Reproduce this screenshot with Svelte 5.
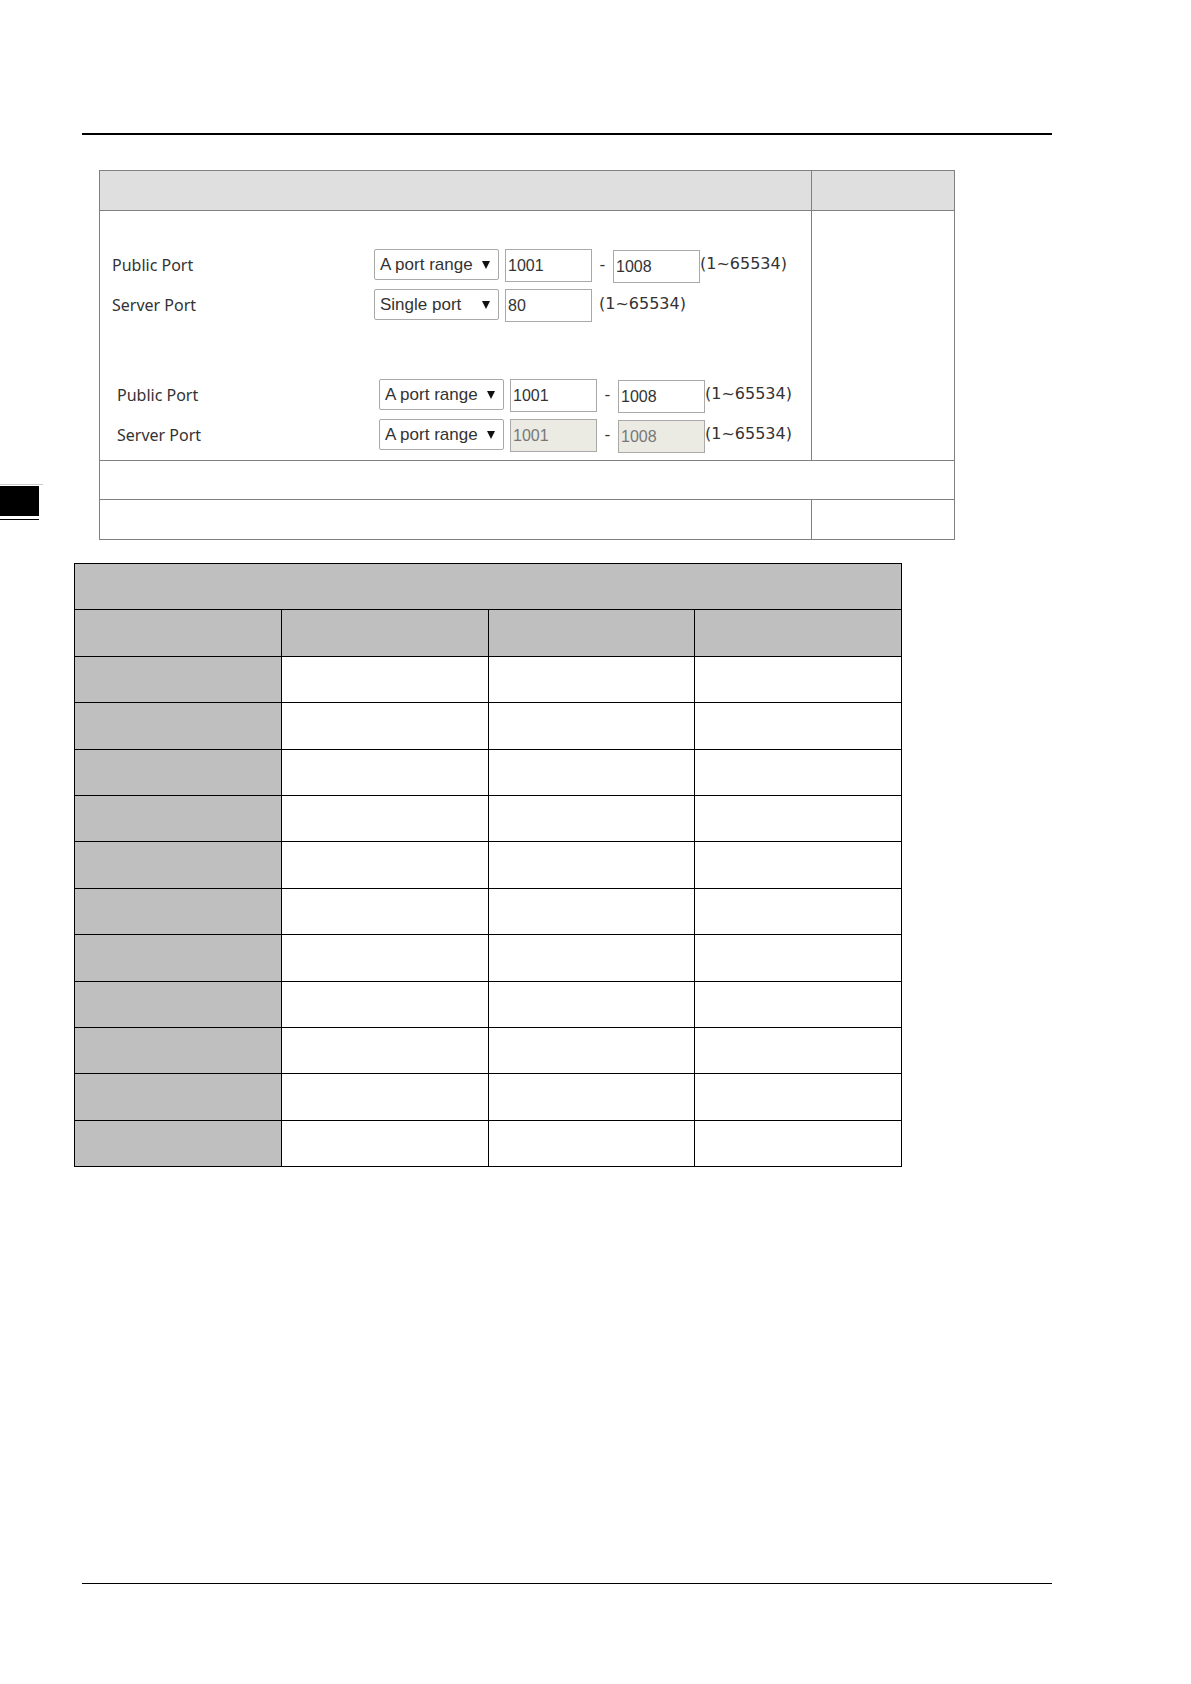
<script>
  const groups = [
    {
      id: 'single',
      rows: [
        { label: 'Public Port', mode: 'A port range', from: '1001', to: '1008' },
        { label: 'Server Port', mode: 'Single port', from: '80' }
      ]
    },
    {
      id: 'range',
      rows: [
        { label: 'Public Port', mode: 'A port range', from: '1001', to: '1008' },
        { label: 'Server Port', mode: 'A port range', from: '1001', to: '1008', disabled: true }
      ]
    }
  ];

  const modes = ['A port range', 'Single port'];
  const bodyRows = Array.from({ length: 11 }, (_, i) => i);
</script>

<div class="page">
  <aside class="gutter">
    <div class="tab-edge"></div>
    <div class="tab"></div>
    <div class="tab-line"></div>
  </aside>

  <main>
    <hr class="rule top" />

    <div class="settings-wrap">
      <table class="settings">
        <colgroup>
          <col class="wide" />
          <col />
        </colgroup>
        <thead>
          <tr class="head"><th></th><th></th></tr>
        </thead>
        <tbody>
          <tr>
            <td class="ports">
              {#each groups as group (group.id)}
                <div class="group {group.id}">
                  {#each group.rows as row, i}
                    {@const id = `${group.id}-${i}`}
                    <div class="row">
                      <label for={id}>{row.label}</label>
                      <div class="select">
                        <select {id} value={row.mode}>
                          {#each modes as mode}
                            <option>{mode}</option>
                          {/each}
                        </select>
                        <svg viewBox="0 0 8 8" aria-hidden="true"><path d="M0 0h8L4 8z" /></svg>
                      </div>
                      <input type="text" value={row.from} disabled={row.disabled} aria-label={row.label} />
                      {#if row.to}
                        <span class="dash">-</span>
                        <input class="to" type="text" value={row.to} disabled={row.disabled} aria-label={row.label} />
                        <span class="hint">(1~65534)</span>
                      {:else}
                        <span class="hint alone">(1~65534)</span>
                      {/if}
                    </div>
                  {/each}
                </div>
              {/each}
            </td>
            <td></td>
          </tr>
          <tr class="note"><td colspan="2"></td></tr>
          <tr class="last"><td></td><td></td></tr>
        </tbody>
      </table>
    </div>

    <div class="matrix-wrap">
      <table class="matrix">
        <thead>
          <tr><th colspan="4"></th></tr>
          <tr><th></th><th></th><th></th><th></th></tr>
        </thead>
        <tbody>
          {#each bodyRows as n (n)}
            <tr><th></th><td></td><td></td><td></td></tr>
          {/each}
        </tbody>
      </table>
    </div>

    <hr class="rule bottom" />
  </main>
</div>

<style>
  :global(body) {
    background: #fff;
  }

  .page {
    display: grid;
    grid-template-columns: 74px 1fr;
    padding: 133px 139px 100px 0;
    font-family: 'DejaVu Sans', Verdana, sans-serif;
    color: #333;
  }

  .gutter {
    padding-top: 351px;
  }

  .tab-edge {
    width: 43px;
    height: 1px;
    margin-bottom: 1px;
    background: #ccc;
  }

  .tab {
    width: 39px;
    height: 30px;
    margin-bottom: 3px;
    background: #000;
  }

  .tab-line {
    width: 39px;
    height: 1px;
    background: #000;
  }

  .rule {
    margin: 0 0 0 8px;
    border: 0;
    background: #000;
  }

  .rule.top {
    height: 2px;
  }

  .rule.bottom {
    height: 1px;
    margin-top: 416px;
  }

  table {
    width: 100%;
    table-layout: fixed;
    border-collapse: collapse;
  }

  th,
  td {
    padding: 0;
  }

  .settings-wrap {
    margin: 35px 97px 0 25px;
  }

  .settings th,
  .settings td {
    border: 1px solid #808080;
  }

  .settings .wide {
    width: 83.3%;
  }

  .settings .head {
    height: 40px;
    background: #dfdfdf;
  }

  .settings .note {
    height: 39px;
  }

  .settings .last {
    height: 40px;
  }

  .settings .ports {
    padding: 38px 0 1px 12px;
  }

  .group.range {
    margin-top: 50px;
    padding-left: 5px;
  }

  .row {
    display: flex;
    align-items: flex-start;
    height: 40px;
  }

  label {
    width: 262px;
    font-family: 'Noto Sans', Tahoma, sans-serif;
    font-size: 16px;
    line-height: 32px;
  }

  .select {
    position: relative;
    width: 125px;
    margin-right: 6px;
  }

  .select svg {
    position: absolute;
    top: 12px;
    right: 9px;
    width: 8px;
    height: 8px;
    fill: #111;
    pointer-events: none;
  }

  select,
  input {
    box-sizing: border-box;
    margin: 0;
    border: 1px solid #a9a9a9;
    background: #fff;
    color: #333;
    font-family: 'Liberation Sans', Arial, sans-serif;
    font-size: 16px;
  }

  select {
    display: block;
    appearance: none;
    width: 100%;
    height: 31px;
    padding: 0 0 0 5px;
    border-radius: 2px;
    font-size: 17px;
  }

  input {
    width: 87px;
    height: 33px;
    padding: 0 2px;
    border-radius: 0;
  }

  input:disabled {
    background: #ebebe4;
    color: #777;
  }

  .to {
    margin-top: 1px;
  }

  .dash {
    width: 21px;
    text-align: center;
    font-size: 16px;
    line-height: 32px;
  }

  .hint {
    font-size: 16px;
    line-height: 30px;
  }

  .hint.alone {
    margin-left: 7px;
  }

  .matrix-wrap {
    margin: 23px 150px 0 0;
  }

  .matrix {
    height: 604px;
  }

  .matrix tr {
    height: 46px;
  }

  .matrix thead tr:last-child {
    height: 47px;
  }

  .matrix th,
  .matrix td {
    border: 1px solid #000;
  }

  .matrix th {
    background: #bfbfbf;
  }
</style>
